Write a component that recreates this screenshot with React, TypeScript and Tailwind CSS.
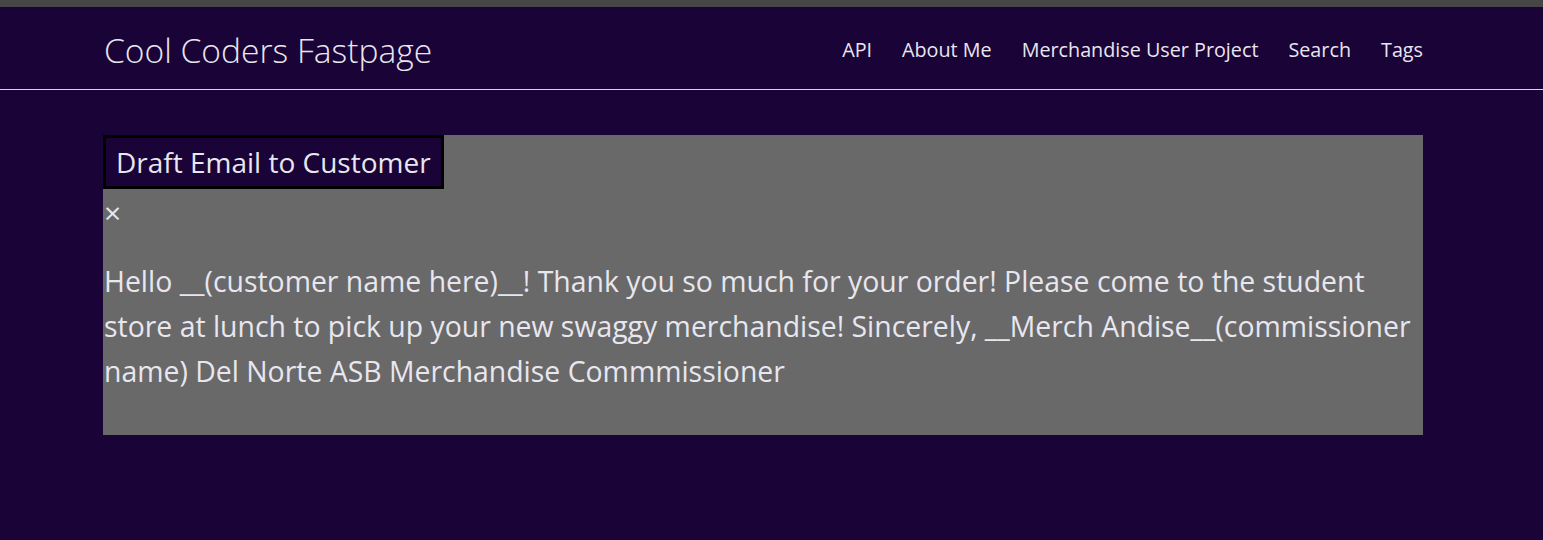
const navItems = ["API", "About Me", "Merchandise User Project", "Search", "Tags"];

const App = () => {
  return (
    <div className="min-h-[540px] w-full bg-[#1a0336] font-['Open_Sans',sans-serif] text-[#e8e6ef]">
      <div className="h-[7px] w-full bg-[#464646]" />
      <header className="border-b border-[#d8d4e0]">
        <div className="ml-[103px] flex h-[82px] w-[1320px] items-center justify-between pt-[4px]">
          <h1 className="pl-[1px] text-[33.6px] font-light">Cool Coders Fastpage</h1>
          <nav className="flex items-center gap-[30px] text-[19.75px]">
            {navItems.map((item) => (
              <a key={item}>{item}</a>
            ))}
          </nav>
        </div>
      </header>

      <main className="ml-[103px] w-[1320px] pt-[45px]">
        <div className="h-[300px] bg-[#696969]">
          <button className="h-[54px] border-[3px] border-black bg-[#1a0336] px-[10px] text-[28px] leading-[40px]">
            Draft Email to Customer
          </button>
          <div className="pl-[1px] text-[30px] leading-[48px]">×</div>
          <p className="mt-[22px] pl-[1px] text-[28.4px] leading-[45px]">
            Hello __(customer name here)__! Thank you so much for your order! Please come to the student
            <br />
            store at lunch to pick up your new swaggy merchandise! Sincerely, __Merch Andise__(commissioner
            <br />
            name) Del Norte ASB Merchandise Commmissioner
          </p>
        </div>
      </main>
    </div>
  );
};

export default App;
